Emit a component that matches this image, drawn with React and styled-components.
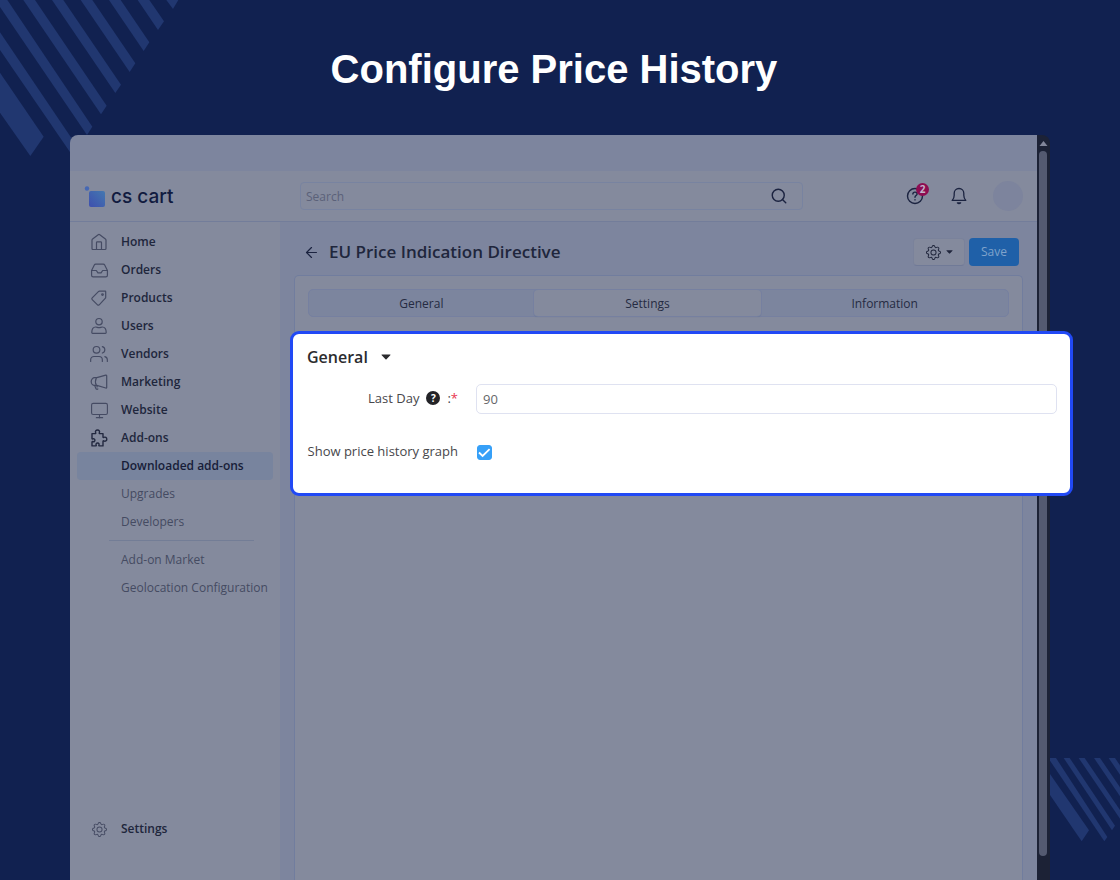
import React, { useState } from "react"
import styled, { createGlobalStyle } from "styled-components"
import { ArrowLeft, Inbox, Monitor, Search, Users } from "lucide-react"
import { BsGear } from "react-icons/bs"

const LINKS = [
  { label: "Home", icon: "home" },
  { label: "Orders", icon: "orders" },
  { label: "Products", icon: "products" },
  { label: "Users", icon: "users" },
  { label: "Vendors", icon: "vendors" },
  { label: "Marketing", icon: "marketing" },
  { label: "Website", icon: "website" },
  { label: "Add-ons", icon: "addons" },
]

const ADDON_LINKS = ["Downloaded add-ons", "Upgrades", "Developers"]
const MORE_LINKS = ["Add-on Market", "Geolocation Configuration"]
const TABS = ["General", "Settings", "Information"]

const Line = ({ children, width = 1.2 }) => (
  <svg
    width="18"
    height="18"
    viewBox="0 0 18 18"
    fill="none"
    stroke="currentColor"
    strokeWidth={width}
    strokeLinecap="round"
    strokeLinejoin="round"
    aria-hidden="true"
  >
    {children}
  </svg>
)

const icons = {
  home: (
    <Line>
      <path d="M2 7.2c0-.5.2-.9.6-1.2L8.2 1.7c.5-.4 1.1-.4 1.6 0L15.4 6c.4.3.6.7.6 1.2v8.3c0 .6-.4 1-1 1H3c-.6 0-1-.4-1-1z" />
      <path d="M6.5 16.5V9.6c0-.5.3-.8.8-.8h3.4c.5 0 .8.3.8.8v6.9" />
    </Line>
  ),
  orders: <Inbox size={19} strokeWidth={1.5} />,
  products: (
    <Line>
      <path d="M15.7 2.7v5.5c0 .5-.2.9-.5 1.2l-6 6.4c-.5.5-1.2.5-1.7 0l-5.3-5.2c-.5-.5-.5-1.200 0-1.700L8.400 2.700c.3-.3.7-.5 1.200-.5h5.600c.3 0 .5.2.5.5z" />
      <circle cx="12.500" cy="5.600" r=".8" />
    </Line>
  ),
  users: (
    <Line>
      <circle cx="9" cy="4.700" r="3.200" />
      <path d="M1.800 15.500c0-3 1.500-5.500 4-5.500 1 0 1.900.7 3.200.7s2.200-.7 3.200-.7c2.500 0 4 2.500 4 5.500 0 .5-.3.8-.8.8H2.600c-.5 0-.8-.3-.8-.8z" />
    </Line>
  ),
  vendors: <Users size={20} strokeWidth={1.4} />,
  marketing: (
    <Line>
      <path d="M6.800 4.700 15.800 2.200c.5-.1.900.2.900.6v11.600c0 .5-.4.800-.900.600L6.800 12.400H4.500C2.900 12.400 1.200 10.700 1.200 8.600s1.700-3.900 3.300-3.900z" />
      <path d="M6.300 4.900c-1.100 2.300-1.100 5 0 7.400M4.700 12.500l1.200 3c.3.800 1.300 1 1.900.5M6.900 12.800l.3 1.200" />
    </Line>
  ),
  website: <Monitor size={19} strokeWidth={1.4} />,
  addons: (
    <Line width={1.4}>
      <path d="M2 4.600h3.200c.5 0 .7-.4.5-.8C4.900 2.400 5.900 1 7.500 1s2.600 1.400 1.800 2.800c-.2.4 0 .8.5.8h3.200v3.300c0 .5.4.7.8.5 1.500-.8 3 .2 3 1.800s-1.500 2.500-3 1.700c-.4-.2-.8 0-.8.5v4.500H9.400c-.5 0-.7-.4-.5-.8.6-1.200-.1-2.100-1.300-2.100s-2 .9-1.400 2.100c.2.4 0 .8-.5.8H2v-3.900c0-.5.4-.7.8-.5 1.200.6 2.100-.1 2.100-1.200s-.9-2-2.100-1.400c-.4.2-.8 0-.8-.5z" />
    </Line>
  ),
  help: (
    <Line width={1.4}>
      <circle cx="9" cy="9" r="7.500" />
      <path d="M6.900 7.100c0-1.200 1-2 2.100-2s2.100.8 2.100 1.900c0 1.500-2.100 1.600-2.100 3.200M9 12.800v.1" />
    </Line>
  ),
  bell: (
    <Line width={1.3}>
      <path d="M2.200 13.400c1.300-1.300 2-3 2-5.200V6.300c0-2.700 2-4.800 4.800-4.800s4.800 2.100 4.800 4.800v1.900c0 2.200.7 3.900 2 5.200z" />
      <path d="M7.400 15.800c.8.900 2.400.900 3.200 0z" />
    </Line>
  ),
}

const Caret = () => (
  <svg width="10" height="6" viewBox="0 0 10 6" aria-hidden="true">
    <path d="M1 .5h8c.5 0 .6.4.3.7L5.500 5.200c-.3.3-.7.3-1 0L.7 1.200C.4.900.5.500 1 .500z" fill="currentColor" />
  </svg>
)

const TopStripes = () => (
  <TopArt width="180" height="158" viewBox="0 0 540 474" aria-hidden="true">
    <path d="M0 218 131 410 91 468 0 338z" />
    <path d="M0 97 234 443 218 468 0 150z" />
    <path d="M0 0H22L277 380 261 405 0 21z" />
    <path d="M70 0H105L320 317 303 343z" />
    <path d="M156 0H190L363 254 346 279z" />
    <path d="M242 0H277L406 190 389 216z" />
    <path d="M327 0H362L448 127 431 153z" />
    <path d="M413 0H448L492 64 474 90z" />
    <path d="M499 0H535L519 27z" />
  </TopArt>
)

const BottomStripes = () => (
  <BottomArt width="70" height="84" viewBox="0 0 210 252" aria-hidden="true">
    <path d="M0 48 117 217 95 250 0 111z" />
    <path d="M0 0H18L172 237 163 250 0 8z" />
    <path d="M41 0H59L195 203 186 217z" />
    <path d="M86 0H104L210 156V182z" />
    <path d="M132 0H150L210 88V115z" />
    <path d="M176 0H195L210 22V50z" />
  </BottomArt>
)

const App = () => {
  const [activeTab, setActiveTab] = useState("Settings")
  const [lastDay, setLastDay] = useState("90")
  const [showGraph, setShowGraph] = useState(true)

  return (
    <Page>
      <GlobalStyle />
      <TopStripes />
      <BottomStripes />
      <Heading>Configure Price History</Heading>

      <Frame>
        <Screen>
          <Strip />
          <Header>
            <Logo href="#">
              <svg width="22" height="22" viewBox="0 0 22 22" aria-hidden="true">
                <defs>
                  <linearGradient id="logo" x1="0" y1="1" x2="1" y2="0">
                    <stop offset="0" stopColor="#3e4fae" />
                    <stop offset="1" stopColor="#4478b0" />
                  </linearGradient>
                </defs>
                <circle cx="3" cy="2.500" r="2.200" fill="#4668b4" />
                <rect x="5" y="5" width="16" height="16" rx="2" fill="url(#logo)" />
              </svg>
              cs cart
            </Logo>
            <SearchBox>
              <SearchInput type="search" placeholder="Search" aria-label="Search" />
              <IconButton aria-label="Find">
                <Search size={18} strokeWidth={1.9} />
              </IconButton>
            </SearchBox>
            <Actions>
              <HeaderButton aria-label="Help">
                {icons.help}
                <Badge>2</Badge>
              </HeaderButton>
              <HeaderButton aria-label="Notifications">{icons.bell}</HeaderButton>
              <Avatar aria-label="Account" />
            </Actions>
          </Header>

          <Body>
            <Sidebar>
              {LINKS.map(({ label, icon }) => (
                <NavLink key={label} href="#" $dark={icon === "addons"}>
                  <NavIcon>{icons[icon]}</NavIcon>
                  {label}
                </NavLink>
              ))}
              {ADDON_LINKS.map((label, i) => (
                <SubLink key={label} href="#" $active={i === 0}>
                  {label}
                </SubLink>
              ))}
              <Divider />
              {MORE_LINKS.map(label => (
                <SubLink key={label} href="#">
                  {label}
                </SubLink>
              ))}
              <Bottom>
                <NavLink href="#">
                  <NavIcon>
                    <BsGear size={15} />
                  </NavIcon>
                  Settings
                </NavLink>
              </Bottom>
            </Sidebar>

            <Main>
              <TitleBar>
                <IconButton aria-label="Back">
                  <ArrowLeft size={17} strokeWidth={1.7} />
                </IconButton>
                <Title>EU Price Indication Directive</Title>
                <ToolButton aria-label="Tools">
                  <BsGear size={15} />
                  <SmallCaret>
                    <Caret />
                  </SmallCaret>
                </ToolButton>
                <SaveButton>Save</SaveButton>
              </TitleBar>

              <Panel>
                <Tabs role="tablist">
                  {TABS.map(tab => (
                    <Tab
                      key={tab}
                      role="tab"
                      aria-selected={activeTab === tab}
                      $active={activeTab === tab}
                      onClick={() => setActiveTab(tab)}
                    >
                      {tab}
                    </Tab>
                  ))}
                </Tabs>

                <Spotlight>
                  <SectionTitle>
                    General <Caret />
                  </SectionTitle>
                  <Field>
                    <Label htmlFor="last-day">
                      Last Day
                      <HelpDot>?</HelpDot>
                      <span>
                        :<Required>*</Required>
                      </span>
                    </Label>
                    <TextInput
                      id="last-day"
                      value={lastDay}
                      onChange={event => setLastDay(event.target.value)}
                    />
                  </Field>
                  <Field>
                    <Label htmlFor="show-graph">Show price history graph</Label>
                    <CheckWrap>
                      <Checkbox
                        id="show-graph"
                        type="checkbox"
                        checked={showGraph}
                        onChange={event => setShowGraph(event.target.checked)}
                      />
                      {showGraph && (
                        <svg width="15" height="15" viewBox="0 0 15 15" aria-hidden="true">
                          <path d="M2 7.500 5.600 11l7-6.800" fill="none" stroke="#fff" strokeWidth="1.800" />
                        </svg>
                      )}
                    </CheckWrap>
                  </Field>
                </Spotlight>
              </Panel>
            </Main>
          </Body>
        </Screen>

        <Scrollbar>
          <svg width="9" height="6" viewBox="0 0 9 6" aria-hidden="true">
            <path d="M4.500 0 8.500 5H.500z" fill="#82869a" />
          </svg>
          <Thumb />
        </Scrollbar>
      </Frame>
    </Page>
  )
}

export default App

const GlobalStyle = createGlobalStyle`
  * {
    box-sizing: border-box;
  }

  body {
    margin: 0;
    background: #112150;
    font-family: "Open Sans", "Noto Sans", sans-serif;
    font-size: 12px;
    line-height: 16px;
    color: #20263c;
  }

  button, input {
    font: inherit;
    color: inherit;
  }

  a {
    color: inherit;
    text-decoration: none;
  }
`

const Page = styled.div`
  position: relative;
  display: flex;
  flex-direction: column;
  min-height: 100vh;
  padding: 0 70px;
  overflow: hidden;
`

const TopArt = styled.svg`
  position: absolute;
  top: 0;
  left: 0;
  fill: #213770;
`

const BottomArt = styled.svg`
  position: absolute;
  right: 0;
  bottom: 38px;
  fill: #213770;
`

const Heading = styled.h1`
  position: relative;
  margin: 0;
  padding: 45px 12px 42px 0;
  font: bold 40px/48px "Liberation Sans", Arial, sans-serif;
  text-align: center;
  color: #fff;
`

const Frame = styled.div`
  position: relative;
  flex: 1;
  display: flex;
`

const Screen = styled.div`
  flex: 1;
  min-width: 0;
  display: flex;
  flex-direction: column;
  border-radius: 8px 0 0 0;
  background: #7d859e;
`

const Strip = styled.div`
  height: 36px;
`

const Header = styled.header`
  display: flex;
  align-items: center;
  height: 51px;
  padding: 0 14px;
  background: #848a9d;
  border-bottom: 1px solid #737d9a;
`

const Logo = styled.a`
  display: flex;
  align-items: center;
  gap: 5px;
  width: 216px;
  padding-top: 2px;
  font: 500 19px/24px Inter, sans-serif;
  color: #111b40;
`

const SearchBox = styled.div`
  flex: 0 1 503px;
  display: flex;
  align-items: center;
  height: 28px;
  padding-right: 14px;
  border: 1px solid #7883a0;
  border-radius: 4px;
`

const SearchInput = styled.input`
  flex: 1;
  min-width: 0;
  padding: 2px 5px 0;
  border: 0;
  background: none;

  &::placeholder {
    color: #5b6179;
  }
`

const IconButton = styled.button`
  position: relative;
  display: flex;
  justify-content: center;
  padding: 0;
  border: 0;
  background: none;
  color: #1b2340;
`

const HeaderButton = styled(IconButton)`
  width: 20px;
`

const Actions = styled.div`
  display: flex;
  align-items: center;
  gap: 24px;
  margin-left: auto;
`

const Badge = styled.span`
  position: absolute;
  top: -4px;
  right: -4px;
  width: 13px;
  height: 13px;
  border-radius: 50%;
  background: #8d0c51;
  color: #c3b3c9;
  font-size: 10px;
  font-weight: 700;
  line-height: 13px;
  text-align: center;
`

const Avatar = styled.button`
  width: 30px;
  height: 30px;
  border: 0;
  border-radius: 50%;
  background: #7d849d;
`

const Body = styled.div`
  flex: 1;
  display: flex;
`

const Sidebar = styled.nav`
  display: flex;
  flex-direction: column;
  width: 210px;
  padding: 6px 7px 37px;
  background: #848a9d;
`

const NavLink = styled.a`
  display: flex;
  align-items: center;
  height: 28px;
  font-weight: 600;
  color: #20263c;

  svg {
    color: ${props => (props.$dark ? "#232940" : "#454b63")};
  }
`

const NavIcon = styled.span`
  display: flex;
  justify-content: center;
  width: 44px;
`

const SubLink = styled.a`
  display: flex;
  align-items: center;
  height: 28px;
  padding-left: 44px;
  border-radius: 4px;
  white-space: nowrap;
  font-weight: ${props => (props.$active ? 600 : 400)};
  color: ${props => (props.$active ? "#171d38" : "#454b62")};
  background: ${props => (props.$active ? "#78849e" : "none")};
`

const Divider = styled.hr`
  width: 145px;
  margin: 4px 0 5px 32px;
  border: 0;
  border-top: 1px solid #737d96;
`

const Bottom = styled.div`
  margin-top: auto;
`

const Main = styled.main`
  flex: 1;
  min-width: 0;
  display: flex;
  flex-direction: column;
  padding: 0 14px;
`

const TitleBar = styled.div`
  display: flex;
  align-items: center;
  height: 53px;
  padding: 7px 4px 0 9px;
`

const Title = styled.h2`
  flex: 1;
  margin: 0 0 0 9px;
  font-size: 17px;
  font-weight: 600;
  line-height: 24px;
`

const ToolButton = styled.button`
  display: flex;
  align-items: center;
  justify-content: center;
  gap: 5px;
  width: 52px;
  height: 28px;
  margin-right: 4px;
  padding: 0;
  border: 1px solid #7a829b;
  border-bottom-color: #707a97;
  border-radius: 4px;
  background: #848a9d;
`

const SmallCaret = styled.span`
  display: flex;

  svg {
    width: 7px;
  }
`

const SaveButton = styled.button`
  width: 50px;
  height: 28px;
  padding: 0;
  border: 0;
  border-radius: 4px;
  background: #1f60a8;
  color: #7fa3cb;
`

const Panel = styled.section`
  flex: 1;
  padding: 13px;
  border: 1px solid #717d9e;
  border-bottom: 0;
  border-radius: 5px 5px 0 0;
  background: #848a9d;
`

const Tabs = styled.div`
  display: grid;
  grid-template-columns: 225fr 228fr 247fr;
  height: 28px;
  border: 1px solid #7680a0;
  border-radius: 5px;
  background: #7c859e;
`

const Tab = styled.button`
  padding: 1px 0 0;
  border: 0;
  border-radius: 4px;
  color: #252b42;
  background: ${props => (props.$active ? "#848a9d" : "none")};
  box-shadow: ${props => (props.$active ? "0 0 0 1px #7680a0, 0 1px 1px #66718f" : "none")};
`

const Spotlight = styled.div`
  position: relative;
  display: flex;
  flex-direction: column;
  margin: 14px -64px 0 -18px;
  padding: 11px 13px 26px 14px;
  border: 3px solid #2149f5;
  border-radius: 9px;
  background: #fff;
  font-size: 13px;
  color: #47474b;
`

const SectionTitle = styled.h3`
  display: flex;
  align-items: center;
  gap: 13px;
  margin: 0 0 15px;
  font-size: 16px;
  font-weight: 600;
  line-height: 24px;
  color: #2b2b2e;
`

const Field = styled.div`
  display: grid;
  grid-template-columns: 151px 1fr;
  align-items: center;
  gap: 18px;
  height: 30px;

  & + & {
    margin-top: 23px;
  }
`

const Label = styled.label`
  display: flex;
  align-items: center;
  justify-content: flex-end;
  gap: 7px;
  padding-bottom: 2px;
  white-space: nowrap;
`

const HelpDot = styled.span`
  width: 14px;
  height: 14px;
  border-radius: 50%;
  background: #232327;
  color: #fff;
  font-size: 10px;
  font-weight: 700;
  line-height: 14px;
  text-align: center;
`

const Required = styled.span`
  color: #e8364f;
`

const TextInput = styled.input`
  width: 100%;
  height: 30px;
  padding: 0 6px;
  border: 1px solid #dfe2f1;
  border-radius: 5px;
  background: #fff;
  color: #66666a;
`

const CheckWrap = styled.span`
  position: relative;
  display: flex;
  width: 17px;
  padding-left: 1px;

  svg {
    position: absolute;
    top: 0;
    left: 1px;
    pointer-events: none;
  }
`

const Checkbox = styled.input`
  appearance: none;
  width: 15px;
  height: 15px;
  margin: 0;
  border: 1px solid #36a0f8;
  border-radius: 3px;

  &:checked {
    background: #36a0f8;
  }
`

const Scrollbar = styled.div`
  display: flex;
  flex-direction: column;
  align-items: flex-start;
  width: 13px;
  padding: 6px 0 24px 2px;
  border-radius: 0 8px 0 0;
  background: #1c2236;
`

const Thumb = styled.div`
  flex: 1;
  width: 8px;
  margin-top: 4px;
  border-radius: 4px;
  background: #545a70;
`
